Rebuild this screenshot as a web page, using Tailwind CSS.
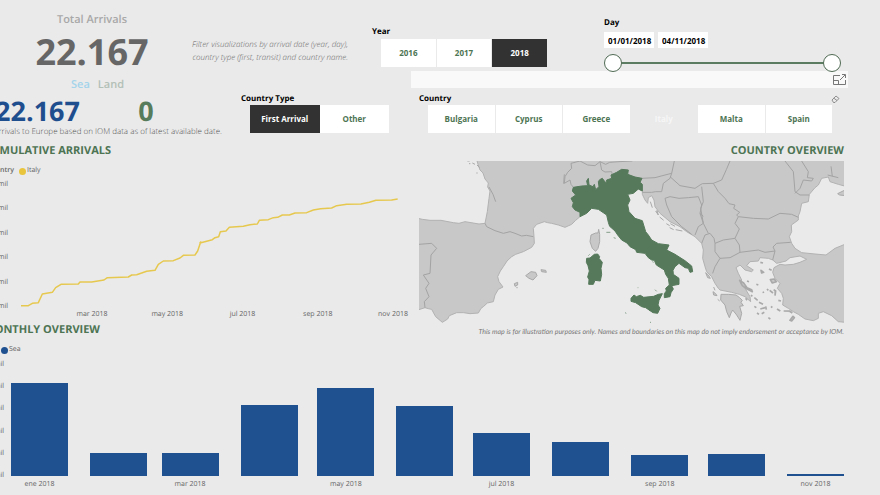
<!DOCTYPE html>
<html lang="en">
<head>
    <meta charset="UTF-8">
    <meta name="viewport" content="width=device-width, initial-scale=1">
    <title>Arrivals to Europe</title>
    <script src="https://cdn.jsdelivr.net/npm/@tailwindcss/browser@4"></script>
</head>
<body class="bg-[#eaeaea] font-['Open_Sans',sans-serif] text-[8px] leading-3 text-[#666] overflow-x-hidden [text-rendering:geometricPrecision]">

<header class="flex items-start">
    <!-- totals -->
    <section class="w-[229px] shrink-0 pt-3">
        <div class="w-[184px] text-center">
            <h2 class="text-[11px] leading-4 font-semibold text-[#a8a8a8]">Total Arrivals</h2>
            <p class="text-[36px] leading-12 font-bold text-[#666]">22.167</p>
        </div>
        <div class="flex gap-2 pl-[71px] pt-px text-[11px] leading-4 font-semibold">
            <h3 class="text-[#a3d4ea]">Sea</h3>
            <h3 class="text-[#b3c0b7]">Land</h3>
        </div>
        <div class="flex pt-1 text-[27px] leading-7 font-bold">
            <p class="flex w-20 justify-end text-[#1f4e8f]">22.167</p>
            <p class="w-[132px] text-center text-[#567c5b]">0</p>
        </div>
        <p class="flex w-[222px] justify-end pt-px whitespace-nowrap font-light text-[#555]">Total arrivals to Europe based on IOM data as of latest available date.</p>
    </section>

    <!-- filters -->
    <div class="flex-1 pr-8">
        <div class="flex h-[71px]">
            <p class="flex w-[119px] shrink-0 justify-end pt-[38px] text-right leading-[13px] whitespace-nowrap font-light italic text-[#666]">Filter visualizations by arrival date (year, day),<br>country type (first, transit) and country name.</p>
            <div class="ml-6 w-[175px] shrink-0 pt-[26px]" role="group" aria-labelledby="year">
                <h3 id="year" class="font-bold text-black">Year</h3>
                <div class="ml-[9px] mt-px grid grid-cols-3 gap-px font-bold text-[#4d7453]">
                    <button class="h-7 bg-white">2016</button>
                    <button class="h-7 bg-white">2017</button>
                    <button class="h-7 bg-[#323232] text-white" aria-pressed="true">2018</button>
                </div>
            </div>
            <div class="ml-[57px] mr-[7px] flex-1 pt-[17px]" role="group" aria-labelledby="day">
                <h3 id="day" class="font-bold text-black">Day</h3>
                <div class="mt-[3px] flex gap-1 font-bold text-black">
                    <input type="text" value="01/01/2018" aria-label="From" class="h-4 w-[50px] bg-white pl-1">
                    <input type="text" value="04/11/2018" aria-label="To" class="h-4 w-[50px] bg-white pl-1">
                </div>
                <div class="relative mt-[5px] flex h-[19px] items-center">
                    <div class="mx-2 h-0.5 flex-1 bg-[#5b7c60]"></div>
                    <input type="range" min="0" max="307" value="0" aria-label="First day" class="absolute inset-0 w-full appearance-none bg-transparent pointer-events-none [&::-webkit-slider-thumb]:pointer-events-auto [&::-webkit-slider-thumb]:size-[18px] [&::-webkit-slider-thumb]:appearance-none [&::-webkit-slider-thumb]:rounded-full [&::-webkit-slider-thumb]:border [&::-webkit-slider-thumb]:border-[#4f6a53] [&::-webkit-slider-thumb]:bg-white">
                    <input type="range" min="0" max="307" value="307" aria-label="Last day" class="absolute inset-0 w-full appearance-none bg-transparent pointer-events-none [&::-webkit-slider-thumb]:pointer-events-auto [&::-webkit-slider-thumb]:size-[18px] [&::-webkit-slider-thumb]:appearance-none [&::-webkit-slider-thumb]:rounded-full [&::-webkit-slider-thumb]:border [&::-webkit-slider-thumb]:border-[#4f6a53] [&::-webkit-slider-thumb]:bg-white">
                </div>
            </div>
        </div>

        <div class="ml-[182px] flex h-[17px] items-center justify-end bg-[#f9f9f9] pr-0.5">
            <button aria-label="Focus mode">
                <svg class="h-3 w-[13px]" viewBox="0 0 13 12" fill="none" stroke="#777">
                    <path d="M7 1.500H.5v9h12V6M.5 6.500h5v4M7 6l5-5M9 .5h3.500V4"/>
                </svg>
            </button>
        </div>

        <div class="flex pt-[5px]">
            <div class="ml-3 w-[148px] shrink-0" role="group" aria-labelledby="type">
                <h3 id="type" class="font-bold text-black">Country Type</h3>
                <div class="ml-[9px] grid grid-cols-2 font-bold text-[#4d7453]">
                    <button class="h-7 bg-[#323232] text-white" aria-pressed="true">First Arrival</button>
                    <button class="h-7 bg-white">Other</button>
                </div>
            </div>
            <div class="ml-[30px] mr-4 flex-1" role="group" aria-labelledby="country">
                <div class="-mr-2 flex items-center justify-between">
                    <h3 id="country" class="font-bold text-black">Country</h3>
                    <button aria-label="Clear selections">
                        <svg class="h-2 w-[9px]" viewBox="0 0 9 8" fill="none" stroke="#777" stroke-width=".8">
                            <path d="M1 5 5 1l3 2.500L4 7.500H2.500zM2.800 3.200 6 5.500"/>
                        </svg>
                    </button>
                </div>
                <div class="ml-[9px] grid grid-cols-6 gap-px font-bold text-[#4d7453]">
                    <button class="h-7 bg-white">Bulgaria</button>
                    <button class="h-7 bg-white">Cyprus</button>
                    <button class="h-7 bg-white">Greece</button>
                    <button class="h-7 text-[#f6f6f6]" aria-pressed="true">Italy</button>
                    <button class="h-7 bg-white">Malta</button>
                    <button class="h-7 bg-white">Spain</button>
                </div>
            </div>
        </div>
    </div>
</header>

<main class="pr-9">
    <div class="flex pt-[5px]">
        <section class="w-[409px] shrink-0">
            <h2 class="flex w-[111px] justify-end text-[11px] leading-4 font-bold whitespace-nowrap text-[#4d7453]">CUMULATIVE ARRIVALS</h2>
            <div class="flex items-center pt-1.5 text-[7px]">
                <span class="flex w-[14px] justify-end font-semibold">Country</span>
                <span class="ml-[5px] size-[7px] rounded-full bg-[#e8c53c]"></span>
                <span class="ml-px">Italy</span>
            </div>
            <div class="flex pt-0.5 text-[7px]">
                <div class="flex w-2 shrink-0 flex-col items-end justify-between whitespace-nowrap">
                    <span>25 mil</span>
                    <span>20 mil</span>
                    <span>15 mil</span>
                    <span>10 mil</span>
                    <span>5 mil</span>
                    <span>0 mil</span>
                </div>
                <svg class="ml-[13px] mr-[11px] my-1.5 h-[122px] min-w-0 flex-1 overflow-visible" viewBox="0 0 1131 366" preserveAspectRatio="none" fill="none">
                    <path vector-effect="non-scaling-stroke" stroke="#e6c84f" stroke-width="1.500" stroke-linejoin="round" d="M0 362H22L34 355 52 353 64 327 94 322 104 308 120 298 172 297 177 291H212L249 285 259 278 322 276 332 270 347 269 377 259 402 256 412 238 427 228 457 227 477 219 487 211 522 210 530 198 539 171 537 174 574 164 582 158 593 155 598 140 615 138 625 127 667 124 687 119 709 117 715 106 742 104 757 98 770 97 784 90H805L822 84 857 83 877 75 899 71 932 69 947 62 977 58 1020 57 1045 52 1065 46 1112 45 1130 42"/>
                </svg>
            </div>
            <div class="-mt-1 flex justify-between pl-[76px] text-center text-[7px] whitespace-nowrap">
                <span class="w-8">mar 2018</span>
                <span class="w-8">may 2018</span>
                <span class="w-8">jul 2018</span>
                <span class="w-8">sep 2018</span>
                <span class="w-8">nov 2018</span>
            </div>
        </section>

        <section class="min-w-0 flex-1 pl-2.5">
            <h2 class="text-right text-[11px] leading-4 font-bold text-[#4d7453]">COUNTRY OVERVIEW</h2>
            <svg class="mt-0.5 w-full" viewBox="0 0 1275 492" stroke="#a3a3a3" stroke-width="3" stroke-linejoin="round">
                <!-- mainland -->
                <path fill="#c8c8c8" stroke="#b2b2b2" d="M173-4 177 10 183 27 192 36 198 54 208 66 206 78 213 90 210 112 205 152 198 187 180 189 168 187 138 182 120 187 103 185 66 178 33 178 10 175-4 172V447L18 440 28 443 38 445 44 456 50 467 70 484 86 474 91 464 113 455 134 455 153 458 178 456 186 442 193 437 205 426 223 422 228 402 238 385 252 378 240 362 236 347 244 330 253 317 264 300 278 287 290 280 313 272 338 259 346 247 345 227 343 202 353 190 376 182 386 185 398 187 418 192 438 199 458 190 470 178 483 167 500 130 560 90 640 75 670 90 670 100 678 117 686 127 688 110 698 104 705 117 708 137 723 157 753 182 783 197 803 212 828 227 848 247 853 267 851 292 858 317 863 332 878 347 888 367 898 382 903 387 918 390 938 394 961 400 978 407 995 422 993 407 978 382 965 367 968 357 958 337 951 320 963 312 978 327 998 332 1003 327 983 314 993 302 1018 300 1023 290 1048 292 1061 297 1065 300 1073 307 1101 300 1113 290 1143 285 1163 295 1143 304 1123 310 1098 312 1083 310 1065 320 1061 334 1068 352 1083 367 1075 382 1088 397 1093 412 1091 432 1108 442 1123 452 1138 460 1158 474 1183 479 1198 472 1198 457 1213 452 1238 464 1258 482 1280 484V249L1248 262 1221 282 1188 279 1148 275 1128 262 1118 247 1111 227 1118 212 1117 192 1138 177 1138 165 1143 152 1148 127 1168 122 1171 100 1188 80 1198 72 1208 52 1228 48 1233 62 1258 70 1280 76V-4Z"/>
                <!-- Peloponnese, Crimea, islands -->
                <g fill="#c8c8c8" stroke="#a9a9a9">
                    <path d="M906 400 928 400 951 402 962 410 970 418 966 424 973 434 962 436 968 457 963 478 953 462 941 447 936 456 931 470 923 452 918 432 905 417Z"/>
                    <path d="M1256 98 1280 86V104L1262 102Z"/>
                    <path d="M320 344 336 332 350 334 354 344 342 357 330 352Z"/>
                    <path d="M366 326 380 328 382 334 368 332ZM286 368 296 364 296 372 288 376ZM292 380H296"/>
                    <path d="M539 205 542 220 542 242 537 262 530 271 520 262 513 242 516 222 530 216 537 216Z"/>
                    <path d="M860 335 868 342 874 352 866 350ZM882 392 890 398 894 404 884 402ZM884 378 888 388M896 415 902 420"/>
                    <path stroke-width="5" d="M962 358 974 366 984 380 998 386 1000 392 984 384 970 374ZM1024 304 1032 306M1050 324 1058 328M1026 328 1034 334 1028 336ZM1054 356 1066 354 1072 362 1060 366ZM1064 386 1070 390 1068 404M1078 418 1086 420M1044 384 1048 388M1006 410 1016 418M1020 424 1032 430M1006 436 1012 440M1024 444 1038 440M1040 436 1042 446M1014 456 1020 460M1052 388 1062 396M1074 444 1084 450M1094 450 1112 450 1120 456M1113 478 1122 466 1126 470 1118 480ZM1048 470 1054 474M980 412 984 418M996 402 1000 406M1032 392 1034 396M1012 370 1018 372M984 360 990 362M1028 458 1036 454M1056 440 1060 436"/>
                    <path d="M694 122 700 140M710 150 718 162 714 148M722 168 734 178M742 188 752 194M752 200 764 206M770 206 790 210M754 188 768 196M145 0H152M160 6 168 10M174 12 182 20M172 36H176M150 8H154"/>
                </g>
                <!-- borders -->
                <g fill="none">
                    <path d="M0 250 38 247 53 262 36 282 33 337 13 342 30 367 20 382 30 407 16 422 18 440M198 187 203 197 228 209 253 217 273 212 288 217 308 225 322 223 343 227M436 40 434 68M210 78 222 100 230 122"/>
                    <path d="M483 0 456 7 458 22 446 34 438 47 436 67 453 57 456 70 463 79M483 0 506 12 528 14 543 2 548 27 558 33 578 32 580 42M543 2 560 10 572 4 600 2 640 0M668 52 708 50 738 42 758 37 766 0M758 37 753 52 733 67 728 92 710 92 698 94 670 94"/>
                    <path d="M753 47 783 74 828 82 843 72 850 68 883 67 908 57 922 26 933 0M738 112 753 107 780 112 808 110 838 107 848 132 843 157 853 187 838 197 828 222M738 112 743 132 758 167 788 197 818 220M848 77 853 122 845 142 853 187 868 217"/>
                    <path d="M883 67 898 92 918 112 930 128 948 132 944 142 962 154 953 162 958 167 1003 172 1048 174 1083 157 1118 160 1138 169M1098 0 1123 32 1128 92 1143 102 1171 102M1148 0 1168 32 1165 50 1183 52 1178 60 1153 57 1143 82 1128 97M1236 16 1240 46M1226 42 1258 50"/>
                    <path d="M958 167 948 187 961 204 948 232 961 252 963 274M888 247 913 237 948 232M888 247V272L903 292 933 290 963 274 1018 267 1038 274 1068 270 1062 258 1073 247 1115 244M1068 270 1061 297M848 247 858 222 873 217 885 232 888 247M903 292 888 317 881 337M843 157 853 166"/>
                </g>
                <!-- Italy -->
                <g fill="#55795a" stroke="#55795a">
                    <path d="M483 167 503 157 518 142 538 145 563 162 568 184 572 196 588 210 596 222 608 237 624 246 633 257 650 266 653 274 678 277 688 290 698 297 706 298 712 312 736 327 740 340 748 352 751 372 740 382 742 390 736 398 736 410 753 407 756 395 763 384 758 374 780 370 780 352 763 340 762 328 768 317 780 307 798 320 808 322 813 334 821 332 818 315 798 299 768 280 743 267 750 252 718 248 698 237 688 222 680 212 670 179 648 172 630 152 626 132 633 117 626 100 643 97 658 84 670 90 670 70 663 64 669 52 648 48 626 40 628 27 608 25 593 34 576 42 578 52 563 57 563 67 556 60 550 52 542 56 538 62 540 77 530 86 526 70 522 77 510 72 508 52 503 60 506 74 488 75 463 79 460 90 470 102 456 112 463 125 460 137 468 147 483 154Z"/>
                    <path d="M503 292 513 291 526 280 536 279 542 287 540 292 550 304 546 322 548 340 544 360 528 358 523 370 509 370 510 356 506 348 511 330 507 314 502 304Z"/>
                    <path d="M636 412 645 402 652 407 664 403 674 409 704 406 718 400 730 398 720 418 717 432 723 442 716 457 702 455 680 440 668 437 650 425 636 421Z"/>
                    <path stroke-width="2" d="M618 455 622 457M708 386 713 391M690 448H694M562 214 574 214M584 230 590 232M508 284 512 280M550 202H554M656 380H658M693 484H696M700 302 704 304"/>
                </g>
            </svg>
            <p class="flex justify-end whitespace-nowrap pt-px font-[Lato,sans-serif] text-[7px] italic text-[#777]">This map is for illustration purposes only. Names and boundaries on this map do not imply endorsement or acceptance by IOM.</p>
        </section>
    </div>

    <section class="-mt-4">
        <h2 class="flex w-[100px] justify-end text-[11px] leading-4 font-bold whitespace-nowrap text-[#4d7453]">MONTHLY OVERVIEW</h2>
        <div class="flex items-center pt-1.5 text-[7px]">
            <span class="ml-px size-[7px] rounded-full bg-[#1f5090]"></span>
            <span class="ml-px">Sea</span>
        </div>
        <div class="flex pt-[3px] text-[7px]">
            <div class="flex h-[123px] w-1 shrink-0 flex-col items-end justify-between whitespace-nowrap">
                <span>5 mil</span>
                <span>4 mil</span>
                <span>3 mil</span>
                <span>2 mil</span>
                <span>1 mil</span>
                <span>0 mil</span>
            </div>
            <!-- columns are as wide as their months are long -->
            <div class="ml-[7px] grid flex-1 grid-cols-[31fr_28fr_31fr_30fr_31fr_30fr_31fr_31fr_30fr_31fr_57px] pt-1.5 text-center">
                <div class="w-[57px]"><div class="flex h-[111px] items-end"><div class="w-full bg-[#1f5191]" style="height:84%"></div></div><p class="pt-[3px]">ene 2018</p></div>
                <div class="w-[57px]"><div class="flex h-[111px] items-end"><div class="w-full bg-[#1f5191]" style="height:21%"></div></div></div>
                <div class="w-[57px]"><div class="flex h-[111px] items-end"><div class="w-full bg-[#1f5191]" style="height:21%"></div></div><p class="pt-[3px]">mar 2018</p></div>
                <div class="w-[57px]"><div class="flex h-[111px] items-end"><div class="w-full bg-[#1f5191]" style="height:64%"></div></div></div>
                <div class="w-[57px]"><div class="flex h-[111px] items-end"><div class="w-full bg-[#1f5191]" style="height:79%"></div></div><p class="pt-[3px]">may 2018</p></div>
                <div class="w-[57px]"><div class="flex h-[111px] items-end"><div class="w-full bg-[#1f5191]" style="height:63%"></div></div></div>
                <div class="w-[57px]"><div class="flex h-[111px] items-end"><div class="w-full bg-[#1f5191]" style="height:39%"></div></div><p class="pt-[3px]">jul 2018</p></div>
                <div class="w-[57px]"><div class="flex h-[111px] items-end"><div class="w-full bg-[#1f5191]" style="height:31%"></div></div></div>
                <div class="w-[57px]"><div class="flex h-[111px] items-end"><div class="w-full bg-[#1f5191]" style="height:19%"></div></div><p class="pt-[3px]">sep 2018</p></div>
                <div class="w-[57px]"><div class="flex h-[111px] items-end"><div class="w-full bg-[#1f5191]" style="height:20%"></div></div></div>
                <div class="w-[57px]"><div class="flex h-[111px] items-end"><div class="w-full bg-[#1f5191]" style="height:2%"></div></div><p class="pt-[3px]">nov 2018</p></div>
            </div>
        </div>
    </section>
</main>

</body>
</html>
